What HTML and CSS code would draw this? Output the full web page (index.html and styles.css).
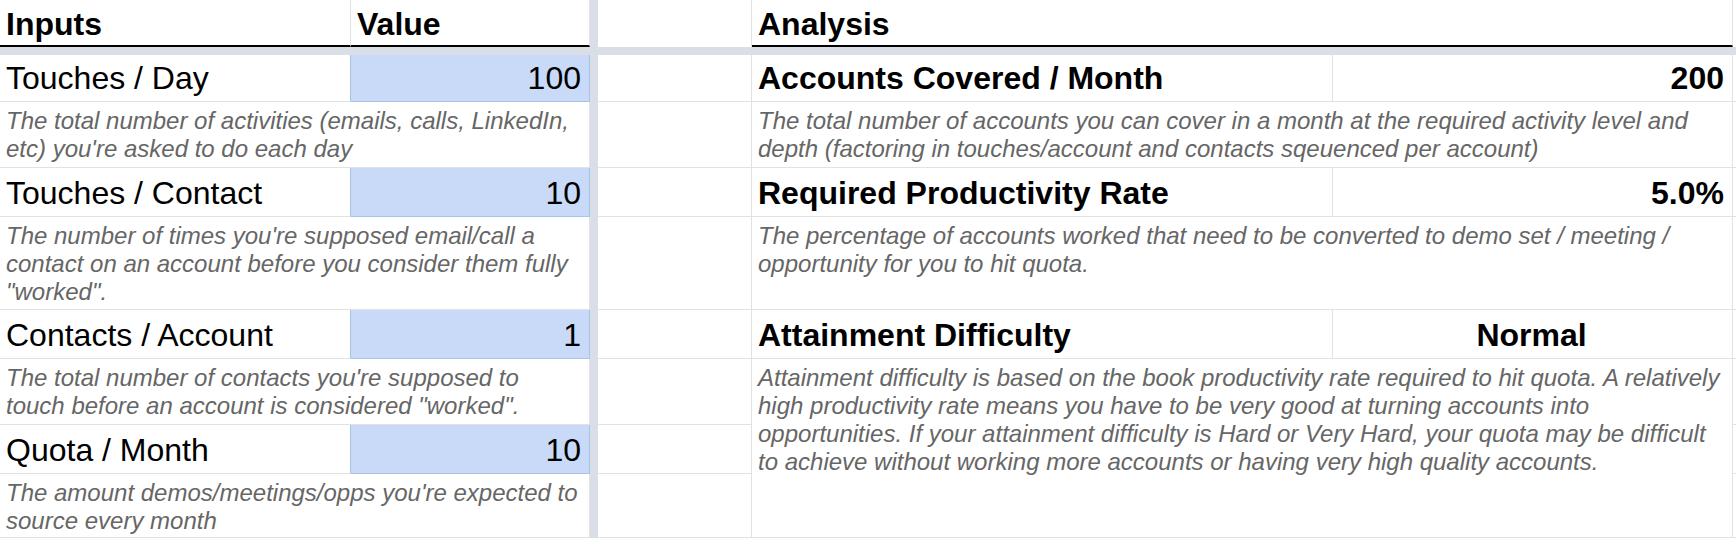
FILE: index.html
```html
<!DOCTYPE html>
<html lang="en">
<head>
<meta charset="utf-8">
<title>Quota Calculator</title>
<link rel="stylesheet" href="styles.css">
</head>
<body>
<div class="sheet">
  <div class="freeze-col"></div>
  <div class="freeze-row"></div>

  <div class="row">
    <div class="cell hdr">Inputs</div>
    <div class="cell hdr">Value</div>
    <div class="cell blank no-bottom"></div>
    <div class="cell hdr span2">Analysis</div>
    <div class="cell edge no-bottom"></div>
  </div>

  <div class="row">
    <div class="cell lbl">Touches / Day</div>
    <div class="cell val">100</div>
    <div class="cell blank"></div>
    <div class="cell metric">Accounts Covered / Month</div>
    <div class="cell metric num">200</div>
    <div class="cell edge"></div>
  </div>

  <div class="row">
    <div class="cell desc span2">The total number of activities (emails, calls, LinkedIn, etc) you're asked to do each day</div>
    <div class="cell blank"></div>
    <div class="cell desc span2">The total number of accounts you can cover in a month at the required activity level and depth (factoring in touches/account and contacts sqeuenced per account)</div>
    <div class="cell edge"></div>
  </div>

  <div class="row">
    <div class="cell lbl">Touches / Contact</div>
    <div class="cell val">10</div>
    <div class="cell blank"></div>
    <div class="cell metric">Required Productivity Rate</div>
    <div class="cell metric num">5.0%</div>
    <div class="cell edge"></div>
  </div>

  <div class="row">
    <div class="cell desc span2">The number of times you're supposed email/call a contact on an account before you consider them fully "worked".</div>
    <div class="cell blank"></div>
    <div class="cell desc span2">The percentage of accounts worked that need to be converted to demo set / meeting / opportunity for you to hit quota.</div>
    <div class="cell edge"></div>
  </div>

  <div class="row">
    <div class="cell lbl">Contacts / Account</div>
    <div class="cell val">1</div>
    <div class="cell blank"></div>
    <div class="cell metric">Attainment Difficulty</div>
    <div class="cell metric center">Normal</div>
    <div class="cell edge"></div>
  </div>

  <div class="row">
    <div class="cell desc span2">The total number of contacts you're supposed to touch before an account is considered "worked".</div>
    <div class="cell blank"></div>
    <div class="cell desc span2 tall">Attainment difficulty is based on the book productivity rate required to hit quota. A relatively high productivity rate means you have to be very good at turning accounts into<br>opportunities. If your attainment difficulty is Hard or Very Hard, your quota may be difficult to achieve without working more accounts or having very high quality accounts.</div>
    <div class="cell edge"></div>
  </div>

  <div class="row">
    <div class="cell lbl">Quota / Month</div>
    <div class="cell val">10</div>
    <div class="cell blank"></div>
    <div class="cell edge"></div>
  </div>

  <div class="row">
    <div class="cell desc span2">The amount demos/meetings/opps you're expected to source every month</div>
    <div class="cell blank"></div>
    <div class="cell edge"></div>
  </div>
</div>
</body>
</html>
```

FILE: styles.css
```css
* {
  box-sizing: border-box;
  margin: 0;
  padding: 0;
}

html,
body {
  width: 1736px;
  height: 538px;
  overflow: hidden;
  background: #ffffff;
}

body {
  font-family: "Liberation Sans", Arial, sans-serif;
  color: #000000;
}

.sheet {
  display: grid;
  grid-template-columns: 351px 239px 8px 154px 581px 400px 3px;
  grid-template-rows: 47px 8px 47px 66px 49px 93px 49px 66px 49px 64px;
  width: 1736px;
  height: 538px;
}

.row {
  display: contents;
}

.freeze-col {
  grid-column: 3;
  grid-row: 1 / -1;
  background: #dadfe7;
}

.freeze-row {
  grid-column: 1 / -1;
  grid-row: 2;
  background: #dadfe7;
}

.cell {
  display: flex;
  align-items: flex-end;
  min-width: 0;
  padding: 0 8px 4px 6px;
  border-right: 1px solid #e2e2e2;
  border-bottom: 1px solid #e2e2e2;
  white-space: nowrap;
  overflow: hidden;
}

.no-bottom {
  border-bottom: none;
}

.edge {
  border-right: none;
}

.span2 {
  grid-column: span 2;
}

.tall {
  grid-row: span 3;
}

.hdr {
  padding-bottom: 2px;
  font-size: 32px;
  line-height: 37px;
  font-weight: bold;
  border-bottom: 2px solid #000000;
}

.lbl {
  font-size: 32px;
  line-height: 37px;
  border-right-color: #a9c2ea;
}

.val {
  justify-content: flex-end;
  font-size: 32px;
  line-height: 37px;
  background: #c9daf8;
  border-color: #a9c2ea;
}

.metric {
  font-size: 32px;
  line-height: 37px;
  font-weight: bold;
}

.num {
  justify-content: flex-end;
}

.center {
  justify-content: center;
}

.desc {
  display: block;
  padding-top: 5px;
  white-space: normal;
  font-size: 24px;
  line-height: 28px;
  font-style: italic;
  color: #666666;
}
```
